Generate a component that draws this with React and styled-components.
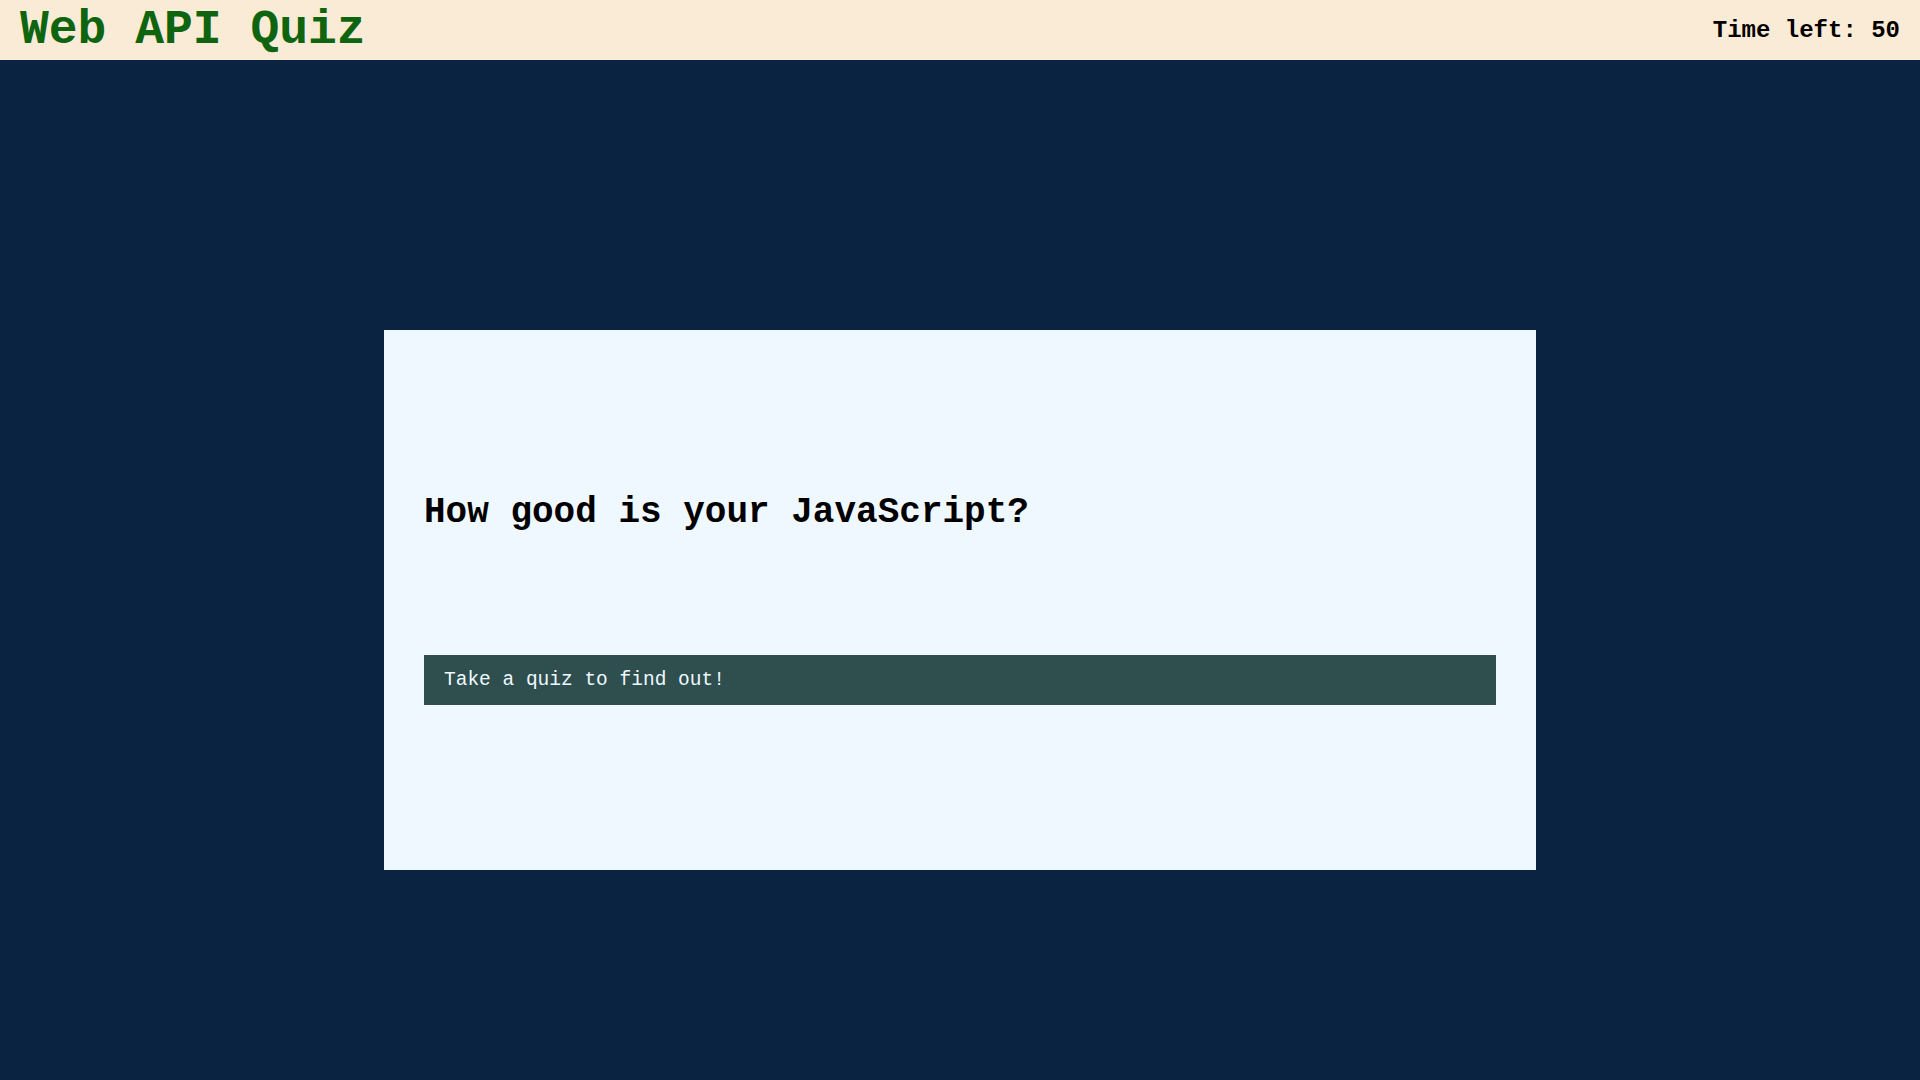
import styled, { createGlobalStyle } from "styled-components";

const GlobalStyle = createGlobalStyle`
  html, body {
    margin: 0;
    padding: 0;
  }
  html {
    overflow-y: scroll;
  }
  body {
    background: #0a2340;
    font-family: "Liberation Mono", "Courier New", monospace;
  }
  * {
    box-sizing: border-box;
  }
  ::-webkit-scrollbar {
    width: 17px;
    background: #f1f1f1;
  }
  ::-webkit-scrollbar-thumb {
    background: #c1c1c1;
    border-left: 2px solid #f1f1f1;
    border-right: 2px solid #f1f1f1;
  }
  ::-webkit-scrollbar-button:single-button {
    height: 17px;
    background: #f1f1f1;
  }
`;

const Header = styled.header`
  height: 60px;
  display: flex;
  align-items: center;
  justify-content: space-between;
  padding: 0 20px;
  background: #faebd7;
`;

const Title = styled.h1`
  margin: 0;
  font-size: 48px;
  font-weight: bold;
  color: #0f6410;
`;

const Timer = styled.div`
  font-size: 24px;
  font-weight: bold;
  color: #000;
`;

const Card = styled.main`
  width: 60%;
  height: 50vh;
  margin: 25vh auto;
  padding: 162px 40px 0;
  background: #f0f8ff;
  display: flex;
  flex-direction: column;
  gap: 122px;
`;

const Question = styled.h2`
  margin: 0;
  font-size: 36px;
  font-weight: bold;
  color: #000;
`;

const StartButton = styled.button`
  height: 50px;
  width: 100%;
  padding: 0 20px;
  border: none;
  background: #2f4f4f;
  color: #f0f8ff;
  font-family: "Liberation Mono", "Courier New", monospace;
  font-size: 19.5px;
  text-align: left;
  cursor: pointer;
`;

const App = () => {
  return (
    <>
      <GlobalStyle />
      <Header>
        <Title>Web API Quiz</Title>
        <Timer>Time left: 50</Timer>
      </Header>
      <Card>
        <Question>How good is your JavaScript?</Question>
        <StartButton>Take a quiz to find out!</StartButton>
      </Card>
    </>
  );
};

export default App;
